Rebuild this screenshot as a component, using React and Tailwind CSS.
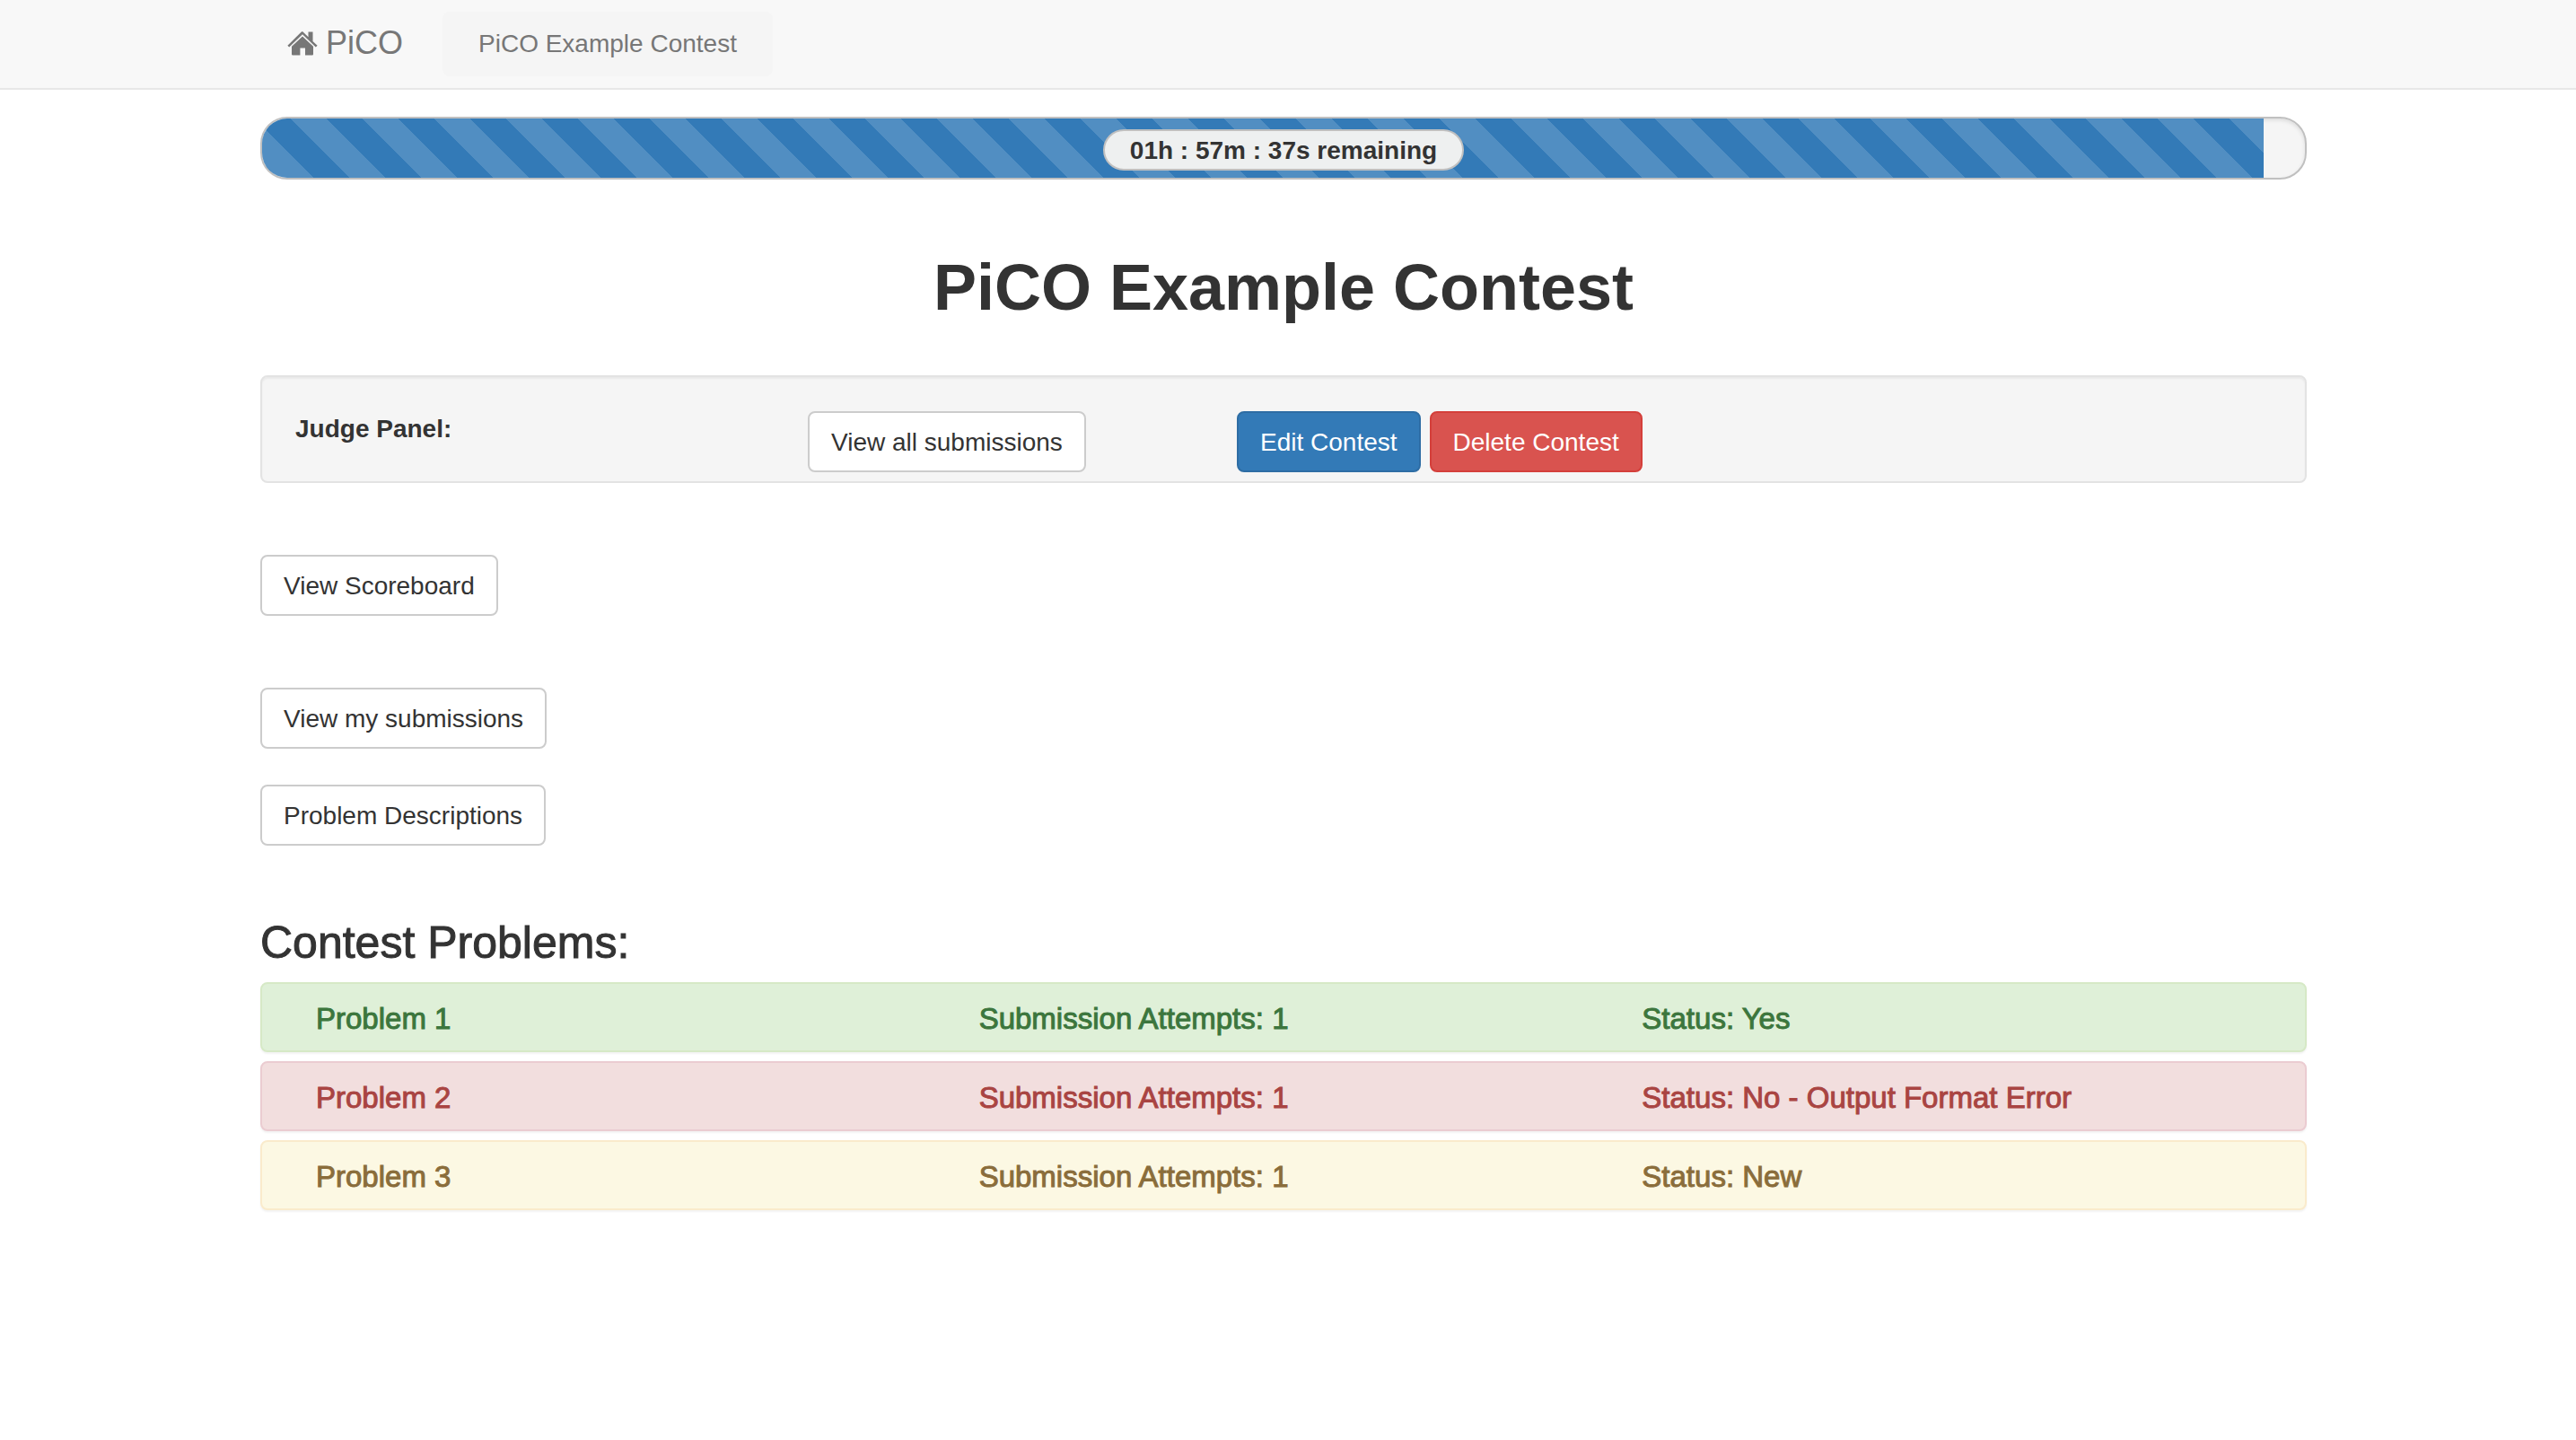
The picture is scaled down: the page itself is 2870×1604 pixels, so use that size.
const HomeIcon = () => (
  <svg viewBox="0 0 34 28" className="h-7 w-[34px]" fill="currentColor" aria-hidden="true">
    <path d="M17 1 L23.5 7.3 V1.5 H28.5 V12 L33.6 16.8 L31.8 18.4 L17 4.2 L2.2 18.4 L0.4 16.8 L15.8 1.6 Q17 0.6 18.2 1.6 Z" />
    <path d="M17 6.4 L29 17.8 V26.6 Q29 27.4 28.2 27.4 H20 V19.6 H14.4 V27.4 H5.8 Q5 27.4 5 26.6 V17.8 Z" />
  </svg>
);

const buttonTones = {
  plain: 'border-[#ccc] bg-white text-[#333]',
  primary: 'border-[#2e6da4] bg-[#337ab7] text-white',
  danger: 'border-[#d43f3a] bg-[#d9534f] text-white',
};

const Button = ({ tone = 'plain', children }) => (
  <button
    type="button"
    className={`rounded-lg border-2 px-6 pt-[13px] pb-[11px] text-[28px] leading-10 whitespace-nowrap ${buttonTones[tone]}`}
  >
    {children}
  </button>
);

const problems = [
  { name: 'Problem 1', attempts: 1, status: 'Yes', tone: 'border-[#d6e9c6] bg-[#dff0d8] text-[#3c763d]' },
  { name: 'Problem 2', attempts: 1, status: 'No - Output Format Error', tone: 'border-[#ebccd1] bg-[#f2dede] text-[#a94442]' },
  { name: 'Problem 3', attempts: 1, status: 'New', tone: 'border-[#faebcc] bg-[#fcf8e3] text-[#8a6d3b]' },
];

const ProblemRow = ({ name, attempts, status, tone }) => (
  <li
    className={`grid grid-cols-3 rounded-lg border-2 px-[30px] pt-[19px] pb-[15px] text-[33px] leading-10 shadow-[0_2px_2px_rgba(0,0,0,0.05)] [-webkit-text-stroke:1px] ${tone}`}
  >
    <a href="#problem" className="px-[30px]">{name}</a>
    <span className="px-[30px]">Submission Attempts: {attempts}</span>
    <span className="px-[30px]">Status: {status}</span>
  </li>
);

const TimeBar = ({ percent }) => (
  <div className="grid h-[70px] overflow-hidden rounded-[30px] border-2 border-[#c0c0c0] bg-[#f5f5f5] shadow-[inset_0_2px_4px_rgba(0,0,0,0.1)]">
    <div
      className="col-start-1 row-start-1 bg-[#337ab7] bg-[linear-gradient(45deg,rgba(255,255,255,0.15)_25%,transparent_25%,transparent_50%,rgba(255,255,255,0.15)_50%,rgba(255,255,255,0.15)_75%,transparent_75%,transparent)] bg-[length:80px_80px] bg-[position:32px_0]"
      style={{ width: `${percent}%` }}
    />
    <div className="col-start-1 row-start-1 mt-3 flex h-[46px] items-center justify-self-center rounded-[23px] border-2 border-[#c0c0c0] bg-[#eef0f0] px-7 pt-[2px] text-[28px] font-bold">
      01h : 57m : 37s remaining
    </div>
  </div>
);

export default function App() {
  return (
    <div className="min-h-screen bg-white font-['Liberation_Sans',Arial,sans-serif] text-[28px] leading-10 text-[#333]">
      <nav className="border-b-2 border-[#e7e7e7] bg-[#f8f8f8] pr-[10px] text-[#777]">
        <div className="mx-auto flex h-[98px] max-w-[2340px] items-center gap-11 px-[60px]">
          <a href="#home" className="flex items-center gap-[9px] pb-[2px] text-[36px]">
            <HomeIcon />
            PiCO
          </a>
          <a href="#contest" className="rounded-lg bg-[#f5f5f5] px-10 py-4">
            PiCO Example Contest
          </a>
        </div>
      </nav>

      <div className="pr-[10px]">
        <main className="mx-auto max-w-[2340px] px-[30px] pt-[30px]">
          <TimeBar percent={98} />

          <h1 className="mt-20 text-center text-[72px] leading-20 font-bold">PiCO Example Contest</h1>

          <section className="mt-[58px] grid grid-cols-[571fr_478fr_1153fr] rounded-lg border-2 border-[#e3e3e3] bg-[#f5f5f5] px-[37px] pt-[38px] pb-[10px] shadow-[inset_0_2px_2px_rgba(0,0,0,0.05)]">
            <strong>Judge Panel:</strong>
            <div>
              <Button>View all submissions</Button>
            </div>
            <div className="flex gap-[10px]">
              <Button tone="primary">Edit Contest</Button>
              <Button tone="danger">Delete Contest</Button>
            </div>
          </section>

          <div className="mt-20 flex flex-col items-start">
            <Button>View Scoreboard</Button>
            <div className="mt-20 flex flex-col items-start gap-10">
              <Button>View my submissions</Button>
              <Button>Problem Descriptions</Button>
            </div>
          </div>

          <h2 className="mt-[82px] text-[50px] leading-[52px] [-webkit-text-stroke:1px]">Contest Problems:</h2>
          <ul className="mt-[18px] flex flex-col gap-[10px]">
            {problems.map((problem) => (
              <ProblemRow key={problem.name} {...problem} />
            ))}
          </ul>
        </main>
      </div>
    </div>
  );
}
